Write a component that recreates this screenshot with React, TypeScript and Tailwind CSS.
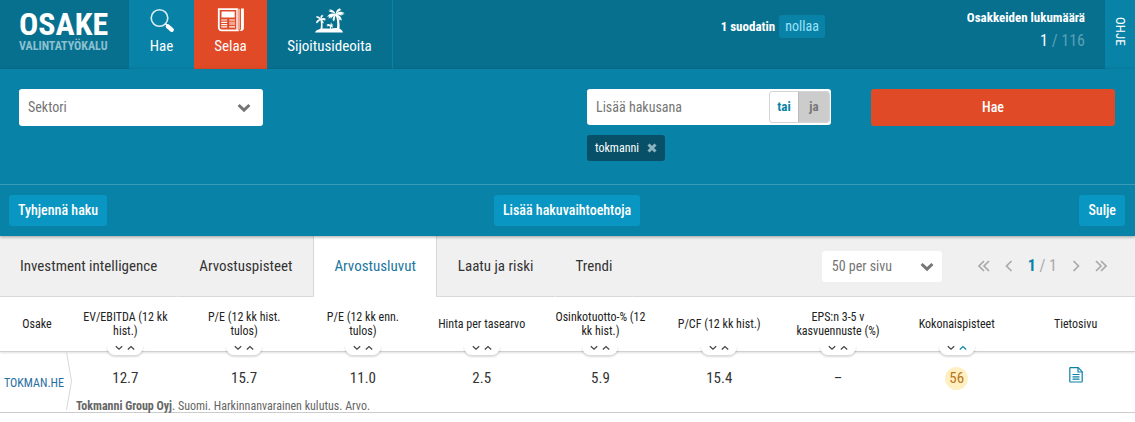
import { useState } from "react";

type SortDir = "asc" | "desc";

type Column = {
  key: string;
  label: string;
  value: string;
};

const COLUMNS: Column[] = [
  { key: "ev", label: "EV/EBITDA (12 kk hist.)", value: "12.7" },
  { key: "peHist", label: "P/E (12 kk hist. tulos)", value: "15.7" },
  { key: "peEst", label: "P/E (12 kk enn. tulos)", value: "11.0" },
  { key: "pb", label: "Hinta per tasearvo", value: "2.5" },
  { key: "yield", label: "Osinkotuotto-% (12 kk hist.)", value: "5.9" },
  { key: "pcf", label: "P/CF (12 kk hist.)", value: "15.4" },
  { key: "eps", label: "EPS:n 3-5 v kasvuennuste (%)", value: "–" },
  { key: "score", label: "Kokonaispisteet", value: "56" },
];

const TABS = [
  "Investment intelligence",
  "Arvostuspisteet",
  "Arvostusluvut",
  "Laatu ja riski",
  "Trendi",
];

const SearchIcon = () => (
  <svg width="26" height="26" viewBox="0 0 26 26" fill="none" stroke="#fff">
    <circle cx="10.500" cy="10" r="8.300" strokeWidth="1.6" stroke="#d9eef5" />
    <path d="M16.500 15.800l2 2" strokeWidth="1.6" />
    <path d="M18.800 18.300l4 3.500" strokeWidth="4.200" strokeLinecap="round" />
  </svg>
);

const NewsIcon = () => (
  <svg width="28" height="26" viewBox="0 0 28 26" fill="none" stroke="#fff">
    <path
      d="M1.8 1.100h18.4v19.800c0 1 .6 1.400 1.600 1.400H4.600c-1.600 0-2.800-1.200-2.800-2.800z"
      strokeWidth="1.8"
    />
    <path d="M20.500 .8h2.600v20.700h-2.600z" fill="#f0a692" stroke="none" />
    <path d="M24 .5h2.900v19.500c0 1.700-1.300 3-3 3h-2.200c1.400 0 2.300-1 2.300-2.500z" fill="#fff" stroke="none" />
    <path d="M4.500 3.500h13.200v6H4.500z" fill="#fff" stroke="none" />
    <path d="M4.200 12h6M12.200 12H18M4.200 14.400h6M4.200 16.600h6M4.200 18.800h6M12.200 18.800H18" strokeWidth="1.2" />
    <path d="M12.200 13.500H18v3.600h-5.800z" fill="#f0a692" stroke="none" />
  </svg>
);

const IslandIcon = () => (
  <svg width="30" height="25" viewBox="0 0 30 25" fill="#fff">
    <path d="M0 24.5c1-3 5.500-4 9.500-4 3 0 5 .3 7 0 2-.4 3-.7 5.500-.5 3 .2 5.500 2 6 4.500z" />
    <path d="M20.400 6.500c1.900 4.500 2.300 9.500 1.500 14.500h2.600c.5-5.500-.4-10.500-2.500-15z" />
    <path d="M21 6.500C19.500 3 17 1.200 14 1.600l1.800 1-2.600.2 2 1.200c2 .1 3.800.9 5.400 2.500z" />
    <path d="M20.800 6.200C18 4.800 14 5 12 9l2.200-.7-.8 2.400 2.200-1.600.2 1.800c1-2 2.800-3.600 5-4z" />
    <path d="M20.600 6.300C18 7.800 17.200 10.500 18 13.500l1.200-1.600.6 1.200c-.3-2.400.2-4.600 1.500-6.200z" />
    <path d="M20.800 6c0-3 1.400-5 4.600-6l-.8 1.600 2-.4-1.800 1.800C23 3.500 22 4.500 21.400 6.500z" />
    <path d="M21 6.200c2-2.700 5.200-3.200 8.700-.8l-2.300.2 1.400 1.400-2.700-.4.6 1.300C25 6.800 23 6.500 21 7.200z" />
    <path d="M21 6.500c3 .2 5.500 2.300 5.800 6.200l-1.600-1.300-.2 1.600-1.300-2.500C23 9 22.200 7.800 21 7z" />
    <path d="M5.200 11.200c1 3.300 1 6.500.2 10h2c.5-3.700.2-7-1.200-10.500z" />
    <path d="M6 11.500C5 8.800 3 7.900.9 8.600l1.300.8-1.500.6C3 9.900 4.300 10.400 5.600 12z" />
    <path d="M6 11C3.300 10.900 1 12.400.9 15.500l1.500-1.200.2 1.300C3.200 13.500 4.500 12.400 6 12z" />
    <path d="M5.600 11.200C5 9 5.600 7.400 7.600 6.500l-.2 1.300 1.300-.2C7.200 8.800 6.700 9.800 6.400 11.500z" />
    <path d="M5.900 11c1.500-1.500 3.500-1.500 5.400.3l-1.500.1.700 1.200C9 11.800 7.600 11.800 6 12z" />
    <path d="M6 11.400c1.700.5 2.800 2 2.600 4.300l-1-1-.4 1C7.200 14 6.800 13 5.900 12.300z" />
    <path d="M15.500 17.200c-1.500-1.600-3-1.300-4.200.1l1.300-.1-.8 1.300c1.200-.7 2.200-.7 3.400 0l-.6 2.400h1.300l.4-2.200 1.500 1.100c.2-1-.1-1.800-.9-2.400l1.600-.1c-.8-.9-1.500-1.100-2.300-.8l.7-1.900c-1.200.4-1.600 1.300-1.400 2.600z" />
  </svg>
);

const Chevron = ({ className }: { className: string }) => (
  <svg className={className} width="14" height="10" viewBox="0 0 14 10" fill="none">
    <path d="M1.600 2l5.400 5.200L12.400 2" stroke="#757575" strokeWidth="3" />
  </svg>
);

const PageArrow = ({ label, path }: { label: string; path: string }) => (
  <button aria-label={label} className="flex items-center">
    <svg width="12" height="12" viewBox="0 0 12 12" fill="none" stroke="#a9a9a9" strokeWidth="1.7">
      <path d={path} />
    </svg>
  </button>
);

const DocumentIcon = () => (
  <svg width="14" height="16" viewBox="0 0 14 16" fill="none" stroke="#0982a8" strokeWidth="1.200">
    <path d="M.8 1.200c0-.3.2-.5.5-.5h7.900l4 4v9.800c0 .3-.2.500-.5.500H1.300c-.3 0-.5-.2-.5-.5z" />
    <path d="M9 .8v4.200h4.200" />
    <path d="M3.500 7.500h7M3.500 9.800h7M3.500 12.100h7" />
  </svg>
);

const SortButtons = ({
  label,
  active,
  onSort,
}: {
  label: string;
  active?: SortDir;
  onSort: (dir: SortDir) => void;
}) => (
  <div className="absolute -bottom-1 left-1/2 z-10 flex h-[11px] w-9 -translate-x-1/2 justify-center gap-1 rounded-b-[8px] bg-white pt-px shadow-[0_2px_2px_rgba(0,0,0,0.15)]">
    <button aria-label={`${label} laskeva`} onClick={() => onSort("desc")}>
      <svg width="8" height="6" viewBox="0 0 8 6" fill="none" className="-mt-1">
        <path d="M.8 1.200L4 4.200l3.200-3" stroke={active === "desc" ? "#0982a8" : "#444"} strokeWidth="1.200" />
      </svg>
    </button>
    <button aria-label={`${label} nouseva`} onClick={() => onSort("asc")}>
      <svg width="8" height="6" viewBox="0 0 8 6" fill="none" className="-mt-1">
        <path d="M.8 4.500L4 1.500l3.200 3" stroke={active === "asc" ? "#0982a8" : "#444"} strokeWidth="1.200" />
      </svg>
    </button>
  </div>
);

const Header = () => (
  <header className="flex h-[69px] bg-[#07708f] text-white">
    <div className="flex w-[129px] shrink-0 flex-col pt-2 pl-[19px]">
      <div className="text-[32px] leading-8 font-bold">OSAKE</div>
      <div className="text-[12px] leading-3 font-bold text-[#8cc0d1]">VALINTATYÖKALU</div>
    </div>
    <nav className="flex text-[15px] leading-5">
      <a href="#hae" className="flex w-[65px] flex-col items-center bg-[#0982a8] pt-2">
        <span className="flex h-7 items-start"><SearchIcon /></span>
        Hae
      </a>
      <a href="#selaa" className="flex w-[73px] flex-col items-center bg-[#e14a26] pt-2">
        <span className="flex h-7 items-start"><NewsIcon /></span>
        Selaa
      </a>
      <a href="#ideat" className="flex w-[126px] flex-col items-center border-r border-[#0982a8] pt-2">
        <span className="flex h-7 items-start"><IslandIcon /></span>
        Sijoitusideoita
      </a>
    </nav>
    <div className="flex flex-1 justify-end gap-[142px]">
      <div className="flex items-start gap-1 pt-[15px] text-[14px] leading-[23px]">
        <b className="text-[13px]">1 suodatin</b>
        <button className="rounded-[3px] bg-[#0982a8] px-[6px] text-[#9be4fa]">nollaa</button>
      </div>
      <div className="pt-2 text-right">
        <div className="text-[13px] leading-5 font-bold">Osakkeiden lukumäärä</div>
        <div className="text-[16px] leading-[26px] text-[#5ba1b7]">
          <span className="text-white">1</span> / 116
        </div>
      </div>
    </div>
    <button className="ml-5 flex w-[30px] shrink-0 items-center justify-center bg-[#0982a8] pb-[6px] text-[13px]">
      <span className="[writing-mode:vertical-rl]">OHJE</span>
    </button>
  </header>
);

const SearchPanel = () => {
  const [words, setWords] = useState(["tokmanni"]);

  return (
    <section className="relative z-10 bg-[#0982a8] text-white shadow-[0_1px_3px_rgba(0,0,0,0.35)]">
      <div className="grid min-h-[116px] grid-cols-4 items-start gap-10 border-b border-[#3a9bb9] pt-5 pr-5 pl-[19px]">
        <div className="relative">
          <select
            aria-label="Sektori"
            className="h-[37px] w-full appearance-none rounded-[3px] bg-white px-[9px] text-[14px] text-[#757575]"
          >
            <option>Sektori</option>
          </select>
          <Chevron className="pointer-events-none absolute top-[14px] right-3" />
        </div>
        <div className="col-start-3">
          <div className="flex h-9 items-center rounded-[3px] bg-white pr-px">
            <input
              aria-label="Lisää hakusana"
              placeholder="Lisää hakusana"
              className="w-full min-w-0 flex-1 bg-transparent px-[9px] text-[14px] outline-none placeholder:text-[#757575]"
            />
            <div className="flex h-8 overflow-hidden rounded-[3px] border border-[#d5d5d5] text-[13px]">
              <button className="w-7 font-bold text-[#0982a8]">tai</button>
              <button className="w-[31px] border-l border-[#bbb] bg-[#ccc] font-bold text-[#777]">ja</button>
            </div>
          </div>
          <div className="mt-[10px] flex gap-2">
            {words.map((word) => (
              <span
                key={word}
                className="flex h-[26px] items-center gap-2 rounded-[3px] bg-[#075067] px-2 text-[12px]"
              >
                {word}
                <button
                  aria-label={`Poista ${word}`}
                  onClick={() => setWords(words.filter((w) => w !== word))}
                >
                  <svg width="10" height="10" viewBox="0 0 10 10" stroke="#8db3bf" strokeWidth="3">
                    <path d="M1.500 1.500l7 7M8.500 1.500l-7 7" />
                  </svg>
                </button>
              </span>
            ))}
          </div>
        </div>
        <button className="h-[37px] rounded-[3px] bg-[#e14a26] text-[14px] font-medium">Hae</button>
      </div>
      <div className="flex h-[51px] items-center justify-between pr-[10px] pl-[9px] text-[14px] font-medium">
        <div className="flex flex-1">
          <button className="h-[31px] rounded-[3px] bg-[#0a96c2] px-[9px]">Tyhjennä haku</button>
        </div>
        <button className="h-[31px] rounded-[3px] bg-[#0a96c2] px-[9px]">Lisää hakuvaihtoehtoja</button>
        <div className="flex flex-1 justify-end">
          <button className="h-[31px] rounded-[3px] bg-[#0a96c2] px-[9px]">Sulje</button>
        </div>
      </div>
    </section>
  );
};

const TabBar = () => {
  const [activeTab, setActiveTab] = useState("Arvostusluvut");

  return (
    <div className="flex h-[61px] bg-[#f0f0f0] text-[15px]">
      <div className="flex">
        {TABS.map((tab) => (
          <button
            key={tab}
            onClick={() => setActiveTab(tab)}
            className={`border-x px-5 whitespace-nowrap first:border-l-0 ${
              tab === activeTab
                ? "border-[#d8d8d8] bg-white text-[#1a77a0]"
                : "border-x-transparent border-b border-b-[#d8d8d8]"
            }`}
          >
            {tab}
          </button>
        ))}
      </div>
      <div className="flex flex-1 items-center justify-end border-b border-[#d8d8d8] pr-7">
        <div className="relative mr-9">
          <select
            aria-label="Rivejä sivulla"
            className="h-[31px] w-[120px] appearance-none rounded-[3px] bg-white px-[10px] text-[14px] text-[#757575]"
          >
            <option>50 per sivu</option>
          </select>
          <Chevron className="pointer-events-none absolute top-[11px] right-2" />
        </div>
        <div className="flex items-center gap-[13px] text-[16px]">
          <PageArrow label="Ensimmäinen sivu" path="M6 1L1 6l5 5M11 1L6 6l5 5" />
          <PageArrow label="Edellinen sivu" path="M8.500 1l-5 5 5 5" />
          <span className="text-[#a9a9a9]">
            <b className="text-[#0982a8]">1</b> / 1
          </span>
          <PageArrow label="Seuraava sivu" path="M3.500 1l5 5-5 5" />
          <PageArrow label="Viimeinen sivu" path="M1 1l5 5-5 5M6 1l5 5-5 5" />
        </div>
      </div>
    </div>
  );
};

const StockTable = () => {
  const [sort, setSort] = useState<{ key: string; dir: SortDir }>({ key: "score", dir: "asc" });

  return (
    <table className="w-full table-fixed border-separate border-spacing-0 text-center">
      <thead className="text-[12px] leading-[14px] text-[#222]">
        <tr className="h-[55px] shadow-[0_1px_2px_rgba(0,0,0,0.12)]">
          <th className="w-[66px] border-b border-[#d0d0d0] pl-2 font-normal">Osake</th>
          {COLUMNS.map(({ key, label }) => (
            <th key={key} className="relative border-b border-[#d0d0d0] px-3 font-normal">
              {label}
              <SortButtons
                label={label}
                active={sort.key === key ? sort.dir : undefined}
                onSort={(dir) => setSort({ key, dir })}
              />
            </th>
          ))}
          <th className="border-b border-[#d0d0d0] font-normal">Tietosivu</th>
        </tr>
      </thead>
      <tbody>
        <tr className="h-12 text-[15px]">
          <td rowSpan={2} className="relative border-b border-[#ccc] pt-[2px] pl-[2px] text-[12px]">
            <a href="#tokman" className="text-[#1f6fa3]">TOKMAN.HE</a>
            <svg
              className="absolute top-0 -right-[6px]"
              width="6"
              height="58"
              viewBox="0 0 6 58"
              fill="none"
              stroke="#d8d8d8"
            >
              <path d="M.5 0l5 29-5 29" />
            </svg>
          </td>
          {COLUMNS.map(({ key, value }) => (
            <td key={key} className="pt-1">
              {key === "score" ? (
                <span className="inline-flex size-[23px] items-center justify-center rounded-full bg-[#fff0c4] text-[#b8751a]">
                  {value}
                </span>
              ) : (
                value
              )}
            </td>
          ))}
          <td className="pb-1">
            <a href="#tietosivu" aria-label="Tietosivu" className="inline-flex align-middle">
              <DocumentIcon />
            </a>
          </td>
        </tr>
        <tr>
          <td
            colSpan={9}
            className="border-b border-[#ccc] pl-[10px] text-left text-[12px] leading-3 text-[#666]"
          >
            <b>Tokmanni Group Oyj</b>. Suomi. Harkinnanvarainen kulutus. Arvo.
          </td>
        </tr>
      </tbody>
    </table>
  );
};

const App = () => (
  <div className="min-h-screen bg-white font-['Roboto_Condensed','Liberation_Sans_Narrow',Roboto,sans-serif] text-[#333]">
    <Header />
    <SearchPanel />
    <TabBar />
    <StockTable />
  </div>
);

export default App;
